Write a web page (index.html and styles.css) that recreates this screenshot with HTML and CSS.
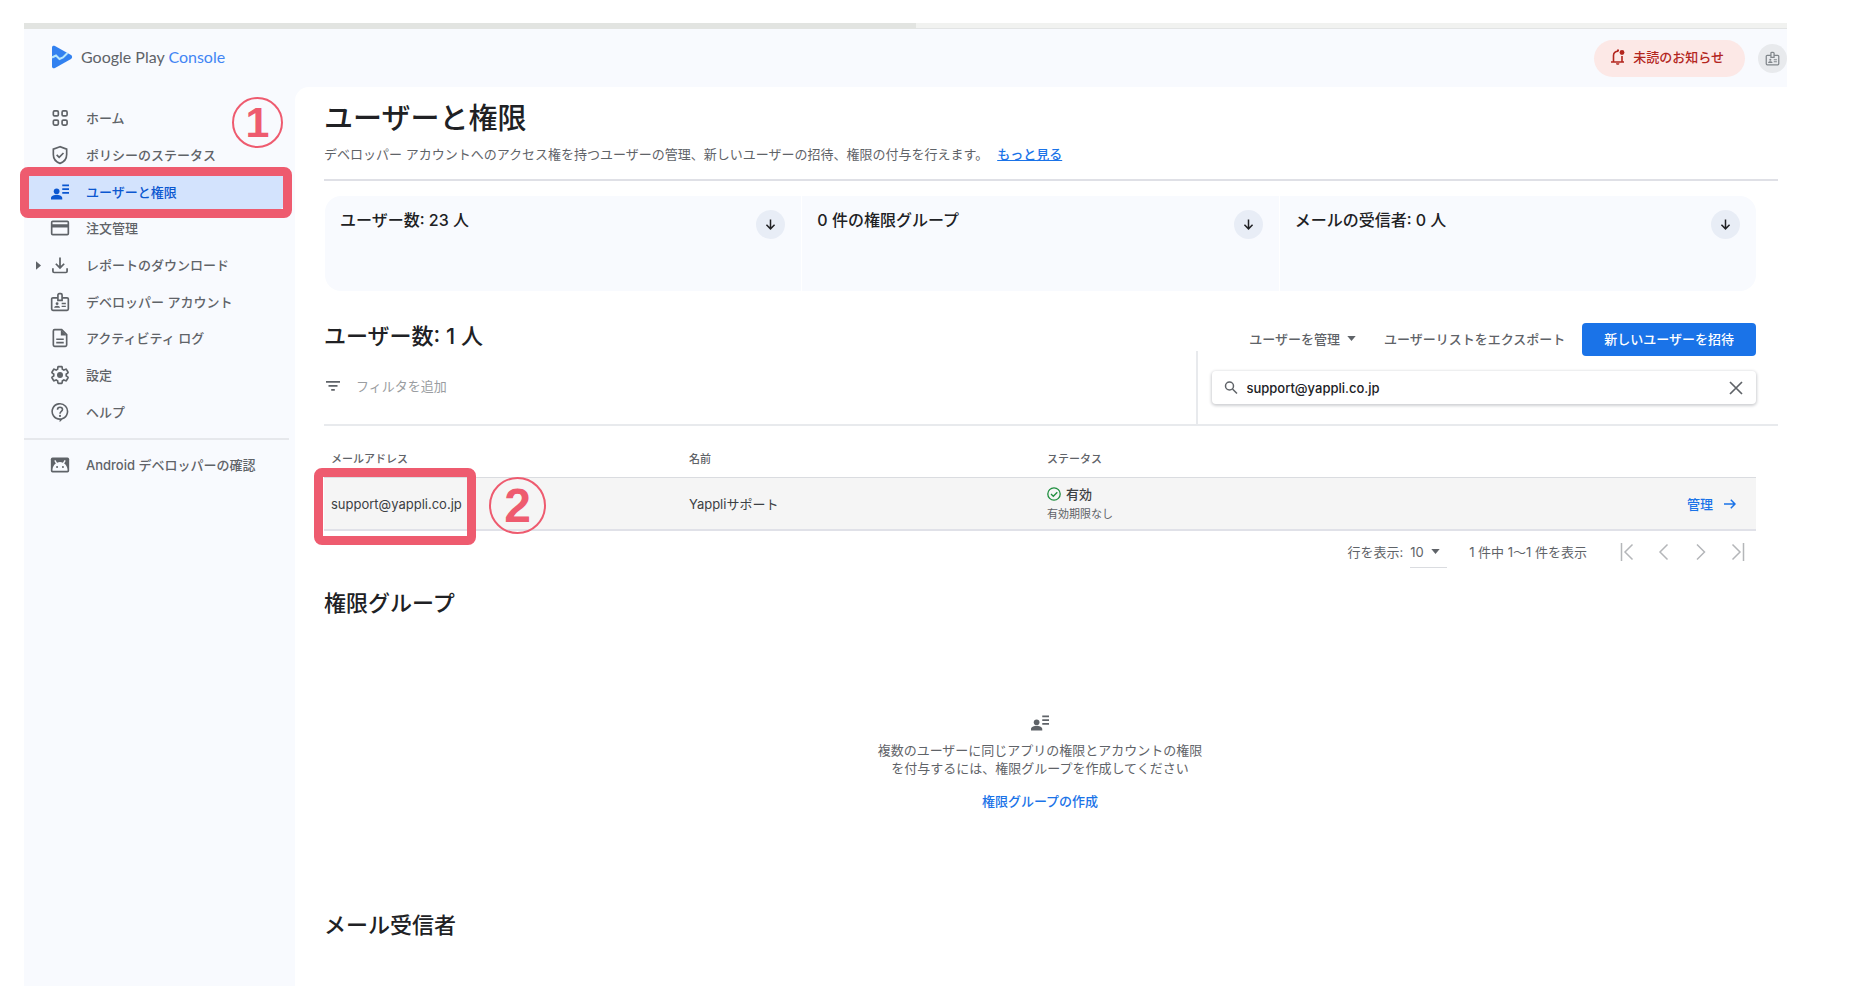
FILE: index.html
```html
<!DOCTYPE html>
<html lang="ja">
<head>
<meta charset="utf-8">
<title>ユーザーと権限 | Google Play Console</title>
<link rel="stylesheet" href="styles.css">
</head>
<body>
<svg class="sprite" aria-hidden="true">
  <symbol id="people" viewBox="0 0 24 24"><circle cx="7.500" cy="11" r="3.800"/><path d="M0 22v-2.200c0-2.800 4.800-4.200 7.500-4.200s7.500 1.400 7.500 4.200V22zM15 2h9v2.200h-9zM15 7h9v2.200h-9zM15 12h9v2.200h-9z"/></symbol>
  <symbol id="badge" viewBox="0 0 24 24"><path d="M9 7H3.500C2.700 7 2 7.700 2 8.500v12c0 .8.700 1.500 1.500 1.500h17c.8 0 1.500-.7 1.500-1.500v-12c0-.8-.7-1.500-1.500-1.500H15M9.500 3.500c0-.8.700-1.500 1.500-1.500h2c.8 0 1.500.7 1.500 1.500V10h-5z" fill="none" stroke="currentColor" stroke-width="2"/><circle cx="8.500" cy="14" r="1.700"/><path d="M5 19c0-1.700 1.500-2.500 3.500-2.500S12 17.300 12 19zM14 13h5v1.600h-5zM14 16.500h5v1.600h-5z"/></symbol>
  <symbol id="down" viewBox="0 0 24 24"><path d="M12 4v15M5.500 12.500 12 19l6.500-6.500" fill="none" stroke="currentColor" stroke-width="2.400"/></symbol>
  <symbol id="caret" viewBox="0 0 10 6"><path d="M0 0h10L5 6z"/></symbol>
</svg>
<div class="app">
  <div class="loading"><span class="loading-bar"></span></div>
  <header class="top">
    <a class="brand" href="#">
      <svg class="logo" viewBox="0 0 22 24"><path fill="#3281f0" d="M1 2.500C1 .8 2.500.3 4 1l16 9c1.500.9 1.500 3 0 4L4 23c-1.500.8-3 .1-3-1.500z"/><path d="m1 12.500 4-2 3.500 3.500 3.500-1.500 4.500-4.500" fill="none" stroke="#b9e8fb" stroke-width="2"/></svg>
      <span class="brand-name">Google Play <span class="brand-product">Console</span></span>
    </a>
    <div class="top-actions">
      <button class="notice" type="button">
        <svg class="bell" viewBox="0 0 14 16"><path d="M2.500 13V6.500C2.500 4 4.500 2.300 7 2.300M11 7v6M0 13h13" fill="none" stroke="currentColor" stroke-width="1.600"/><circle cx="11" cy="3.500" r="2.400"/><path d="M5 14.200h3.400c0 1-.7 1.600-1.700 1.600S5 15.200 5 14.200zM6 .5h2v2H6z"/></svg>
        未読のお知らせ
      </button>
      <button class="account" type="button" aria-label="アカウント"><svg class="icon-s"><use href="#badge"/></svg></button>
    </div>
  </header>
  <div class="body">
    <nav class="side">
      <ul class="menu">
        <li><a class="item" href="#"><svg class="icon" viewBox="0 0 24 24"><g fill="none" stroke="currentColor" stroke-width="2"><rect x="4" y="3.500" width="6" height="6" rx="1.500"/><rect x="14.500" y="3.500" width="6" height="6" rx="1.500"/><rect x="4" y="14.500" width="6" height="6" rx="1.500"/><rect x="14.500" y="14.500" width="6" height="6" rx="1.500"/></g></svg>ホーム</a><span class="step step-1">1</span></li>
        <li><a class="item" href="#"><svg class="icon" viewBox="0 0 24 24"><path d="M12 2 4 5v6.500c0 4.800 3.300 9 8 10.500 4.700-1.500 8-5.700 8-10.500V5zM8 11.800l3 3 5.200-5.200" fill="none" stroke="currentColor" stroke-width="2"/></svg>ポリシーのステータス</a></li>
        <li><a class="item current" href="#" aria-current="page"><svg class="icon"><use href="#people"/></svg>ユーザーと権限</a><span class="frame frame-nav"></span></li>
        <li><a class="item" href="#"><svg class="icon" viewBox="0 0 24 24"><path d="M20.500 3h-17A2.400 2.400 0 0 0 1 5.400v13.200A2.400 2.400 0 0 0 3.500 21h17a2.400 2.400 0 0 0 2.500-2.400V5.400A2.400 2.400 0 0 0 20.500 3zM21 19H3v-7.500h18zM21 7.500H3V5h18z"/></svg>注文管理</a></li>
        <li><svg class="expand" viewBox="0 0 6 10"><path d="M0 0v10l6-5z"/></svg><a class="item" href="#"><svg class="icon" viewBox="0 0 24 24"><path d="M12 3v12M7 10.500l5 5 5-5M3.500 16v3.500c0 .8.600 1.500 1.500 1.500h14c.9 0 1.500-.7 1.500-1.500V16" fill="none" stroke="currentColor" stroke-width="2.100"/></svg>レポートのダウンロード</a></li>
        <li><a class="item" href="#"><svg class="icon"><use href="#badge"/></svg>デベロッパー アカウント</a></li>
        <li><a class="item" href="#"><svg class="icon" viewBox="0 0 24 24"><path d="M14 2H5.500C4.700 2 4 2.700 4 3.500v17c0 .8.700 1.500 1.500 1.500h13c.8 0 1.500-.7 1.500-1.500V8z" fill="none" stroke="currentColor" stroke-width="2"/><path d="M13 2v7h7zM7.500 12.500h9v2h-9zM7.500 16.500h9v2h-9z"/></svg>アクティビティ ログ</a></li>
        <li><a class="item" href="#"><svg class="icon" viewBox="0 0 24 24"><path d="M19.430 12.980c.04-.32.070-.64.070-.98s-.03-.66-.07-.98l2.110-1.650c.19-.15.240-.42.120-.64l-2-3.460c-.12-.22-.39-.3-.61-.22l-2.490 1c-.52-.4-1.080-.73-1.690-.98l-.38-2.650C14.460 2.180 14.250 2 14 2h-4c-.25 0-.46.180-.49.420l-.38 2.650c-.61.250-1.170.590-1.690.980l-2.490-1c-.23-.09-.49 0-.61.220l-2 3.460c-.13.220-.07.490.12.640l2.110 1.650c-.04.320-.07.650-.07.980s.03.660.07.980l-2.110 1.650c-.19.150-.24.420-.12.640l2 3.460c.12.220.39.300.61.220l2.490-1c.52.400 1.080.730 1.690.980l.38 2.650c.03.240.24.420.49.420h4c.25 0 .46-.18.490-.42l.38-2.650c.61-.25 1.170-.59 1.690-.98l2.490 1c.23.090.49 0 .61-.22l2-3.460c.12-.22.070-.49-.12-.64z" fill="none" stroke="currentColor" stroke-width="2"/><circle cx="12" cy="12" r="3.600"/></svg>設定</a></li>
        <li><a class="item" href="#"><svg class="icon" viewBox="0 0 24 24"><path d="M12 20.500a9.200 9.200 0 1 1 2.500-.4L12.500 22v-1.500zM9 9.200c0-1.800 1.300-3 3-3s3 1.200 3 2.900c0 2.200-3 2.300-3 4.900" fill="none" stroke="currentColor" stroke-width="1.900"/><circle cx="12" cy="16.700" r="1.300"/></svg>ヘルプ</a></li>
      </ul>
      <div class="side-foot">
        <a class="item" href="#"><svg class="icon" viewBox="0 0 24 24"><rect x="1" y="3" width="22" height="18" rx="2"/><path class="droid" d="m6.500 6 2 3.200a9 9 0 0 1 7 0l2-3.200 1.400.8-1.900 3.400c2.300 1.600 3.600 4 4 7V19H3v-1.800c.4-3 1.700-5.400 4-7L5.100 6.800z"/><circle cx="8.500" cy="14.500" r="1.200"/><circle cx="15.500" cy="14.500" r="1.200"/></svg>Android デベロッパーの確認</a>
      </div>
    </nav>
    <main class="main">
      <h1 class="title">ユーザーと権限</h1>
      <p class="lead">デベロッパー アカウントへのアクセス権を持つユーザーの管理、新しいユーザーの招待、権限の付与を行えます。<a class="more" href="#">もっと見る</a></p>
      <section class="cards">
        <div class="card"><h3 class="card-title">ユーザー数: 23 人</h3><button class="round" type="button" aria-label="ユーザーへ移動"><svg class="icon-s"><use href="#down"/></svg></button></div>
        <div class="card"><h3 class="card-title">0 件の権限グループ</h3><button class="round" type="button" aria-label="権限グループへ移動"><svg class="icon-s"><use href="#down"/></svg></button></div>
        <div class="card"><h3 class="card-title">メールの受信者: 0 人</h3><button class="round" type="button" aria-label="メール受信者へ移動"><svg class="icon-s"><use href="#down"/></svg></button></div>
      </section>
      <section>
        <div class="list-head">
          <h2 class="heading">ユーザー数: 1 人</h2>
          <div class="actions">
            <button class="plain" type="button">ユーザーを管理<svg class="caret"><use href="#caret"/></svg></button>
            <button class="plain" type="button">ユーザーリストをエクスポート</button>
            <button class="primary" type="button">新しいユーザーを招待</button>
          </div>
        </div>
        <div class="filters">
          <label class="filter"><svg class="filter-icon" viewBox="0 0 14 10"><path d="M0 0h14v1.700H0zM2.500 4h9v1.700h-9zM5.200 8h3.600v1.700H5.200z"/></svg><input class="filter-input" type="text" placeholder="フィルタを追加" aria-label="フィルタを追加"></label>
          <div class="search-cell">
            <label class="search">
              <svg class="search-icon" viewBox="0 0 14 14"><g fill="none" stroke="currentColor" stroke-width="1.500"><circle cx="5.500" cy="5" r="4"/><path d="m8.500 8 4.500 4.500"/></g></svg>
              <input class="search-input" type="text" value="support@yappli.co.jp" aria-label="ユーザーを検索">
              <button class="clear" type="button" aria-label="クリア"><svg class="clear-icon" viewBox="0 0 14 14"><path d="m1 1 12 12M13 1 1 13" fill="none" stroke="currentColor" stroke-width="1.700"/></svg></button>
            </label>
          </div>
        </div>
        <table class="users">
          <thead><tr><th>メールアドレス</th><th>名前</th><th>ステータス</th><th class="manage-col"></th></tr></thead>
          <tbody><tr>
            <td class="mail">support@yappli.co.jp<span class="frame frame-mail"></span><span class="step step-2">2</span></td>
            <td>Yappliサポート</td>
            <td><span class="status"><svg class="ok" viewBox="0 0 14 14"><g fill="none" stroke="currentColor" stroke-width="1.300"><circle cx="7" cy="7" r="6.200"/><path d="m4 7 2.300 2.300 4-4"/></g></svg>有効</span><span class="expiry">有効期限なし</span></td>
            <td class="manage-col"><a class="link" href="#">管理<svg class="arrow" viewBox="0 0 12 10"><path d="M0 5h11M6.800.8 11 5 6.800 9.200" fill="none" stroke="currentColor" stroke-width="1.500"/></svg></a></td>
          </tr></tbody>
        </table>
        <div class="pager">
          <label class="rows-label" for="rows">行を表示:</label>
          <span class="rows"><select id="rows" class="rows-select"><option>10</option></select><svg class="caret rows-caret"><use href="#caret"/></svg></span>
          <span class="range">1 件中 1〜1 件を表示</span>
          <div class="pages">
            <button class="page" type="button" aria-label="最初のページ"><svg viewBox="0 0 24 24"><path d="M6.500 3v18M17.500 4.500 10 12l7.500 7.500"/></svg></button>
            <button class="page" type="button" aria-label="前のページ"><svg viewBox="0 0 24 24"><path d="M15.500 4.500 8 12l7.500 7.500"/></svg></button>
            <button class="page" type="button" aria-label="次のページ"><svg viewBox="0 0 24 24"><path d="M8 4.500l7.500 7.500L8 19.500"/></svg></button>
            <button class="page" type="button" aria-label="最後のページ"><svg viewBox="0 0 24 24"><path d="M6.500 4.500 14 12l-7.500 7.500M17.500 3v18"/></svg></button>
          </div>
        </div>
      </section>
      <section class="groups">
        <h2 class="heading">権限グループ</h2>
        <div class="empty">
          <svg class="icon"><use href="#people"/></svg>
          <p class="empty-text">複数のユーザーに同じアプリの権限とアカウントの権限<br>を付与するには、権限グループを作成してください</p>
          <a class="link" href="#">権限グループの作成</a>
        </div>
      </section>
      <section>
        <h2 class="heading">メール受信者</h2>
      </section>
    </main>
  </div>
</div>
</body>
</html>
```
FILE: styles.css
```css
* { box-sizing: border-box; }
body {
  margin: 0;
  background: #fff;
  color: #5f6368;
  font: 500 13px/20px Inter, "Noto Sans CJK JP", sans-serif;
}
h1, h2, h3, p, ul { margin: 0; padding: 0; font-weight: 500; }
button, input, select { font: inherit; color: inherit; border: 0; background: none; padding: 0; margin: 0; }
svg { fill: currentColor; flex: none; display: block; }
.sprite { position: absolute; width: 0; height: 0; }

.app {
  display: flex;
  flex-direction: column;
  min-height: 100vh;
  padding: 23px 67px 0 24px;
}
.loading { height: 6px; background: #f1f2f0; border-bottom: 1px solid #e2e4e4; }
.loading-bar { display: block; width: 892px; max-width: 51%; height: 6px; background: #e2e4e1; }

.top {
  display: flex;
  justify-content: space-between;
  align-items: center;
  height: 58px;
  padding-left: 27px;
  background: #f8fafe;
}
.brand { display: flex; align-items: center; gap: 8px; padding-bottom: 2px; text-decoration: none; }
.logo { width: 22px; height: 24px; }
.brand-name { font: 400 16px/24px Lato, sans-serif; color: #5f6368; }
.brand-product { color: #4285f4; }
.top-actions { display: flex; align-items: center; gap: 13px; }
.notice {
  display: flex;
  align-items: center;
  gap: 8px;
  height: 37px;
  padding: 0 21px 2px 17px;
  border-radius: 19px;
  background: #fce8e6;
  color: #b3261e;
}
.bell { width: 14px; height: 16px; }
.account, .round { display: grid; place-items: center; width: 29px; height: 29px; border-radius: 50%; }
.account { background: #e8eaed; color: #80868b; }
.icon { width: 20px; height: 20px; }
.icon-s { width: 15px; height: 15px; }

.body { display: flex; flex: 1; background: #f8fafe; }
.side { flex: none; width: 271px; padding-top: 13px; }
.menu { display: grid; grid-auto-rows: 1fr; height: 330px; list-style: none; }
.menu li { position: relative; display: grid; }
.item {
  display: flex;
  align-items: center;
  gap: 16px;
  margin-right: 10px;
  padding-left: 26px;
  color: #5f6368;
  text-decoration: none;
}
.item.current { border-radius: 0 8px 8px 0; background: #d3e3fd; color: #0b57d0; }
.item.current .icon { padding: 1px; }
.droid { fill: #f8fafe; }
.expand { position: absolute; left: 12px; top: 14px; width: 5px; height: 9px; }
.side-foot { margin: 8px 6px 0 0; padding-top: 15px; border-top: 2px solid #e6e8ec; }

.frame { position: absolute; border: 9px solid #ee5b6f; border-radius: 8px; pointer-events: none; }
.frame-nav { inset: -6px 3px -8px -4px; }
.frame-mail { left: -10px; top: -10px; width: 162px; height: 77px; }
.step {
  position: absolute;
  display: grid;
  place-items: center;
  border: 2px solid #ee5b6f;
  border-radius: 50%;
  color: #ee5b6f;
  font: 700 43px/1 "Liberation Sans", Arial, sans-serif;
}
.step-1 { left: 208px; top: -3px; width: 51px; height: 51px; }
.step-2 { left: 165px; top: -1px; width: 57px; height: 57px; font-size: 48px; }

.main { flex: 1; min-width: 0; padding: 12px 9px 0 29px; border-radius: 14px 0 0 0; background: #fff; }
.title { color: #202124; font-size: 29px; line-height: 40px; }
.lead { padding: 5px 0 15px; border-bottom: 2px solid #dfe0e6; font-weight: 400; }
.more { margin-left: 9px; color: #1a73e8; font-weight: 500; }
.cards { display: grid; grid-template-columns: repeat(3, 1fr); gap: 1px; margin: 15px 22px 32px 1px; border-radius: 16px; overflow: hidden; }
.card { display: flex; justify-content: space-between; align-items: flex-start; height: 95px; padding: 14px 16px 0 15px; background: #f8fafe; }
.card-title { color: #202124; font-size: 16px; line-height: 20px; }
.round { background: #e8edf6; color: #202124; }

.list-head { display: flex; justify-content: space-between; align-items: flex-start; margin-right: 22px; }
.heading { color: #202124; font-size: 22px; line-height: 26px; }
.actions { display: flex; gap: 17px; height: 33px; }
.plain { display: flex; align-items: center; gap: 7px; padding-bottom: 2px; }
.plain:first-child { margin-right: 11px; }
.caret { width: 9px; height: 5px; }
.primary { padding: 0 22px 2px; border-radius: 4px; background: #1a73e8; color: #fff; }
.filters { display: flex; align-items: stretch; height: 75px; margin-top: -5px; border-bottom: 2px solid #e8eaed; }
.filter { display: flex; align-items: center; flex: 1; gap: 16px; padding: 0 0 3px 2px; }
.filter-icon { width: 14px; height: 10px; }
.filter-input { flex: 1; font-weight: 400; outline: 0; }
.filter-input::placeholder { color: #9a9da1; opacity: 1; }
.search-cell { display: flex; align-items: center; width: 40%; padding: 0 22px 0 14px; border-left: 2px solid #e8eaed; }
.search { display: flex; align-items: center; flex: 1; gap: 8px; height: 33px; padding: 0 13px 0 12px; border-radius: 4px; box-shadow: 0 1px 3px 1px #d0d1d4; }
.search-icon { width: 14px; height: 14px; }
.search-input { flex: 1; color: #202124; outline: 0; }
.clear-icon { width: 14px; height: 14px; }

.users { width: calc(100% - 22px); border-collapse: separate; border-spacing: 0; table-layout: fixed; }
.users th { height: 51px; padding: 15px 0 0 7px; font-size: 11px; font-weight: 500; text-align: left; }
.users td { position: relative; height: 54px; padding: 0 0 0 7px; border-top: 1px solid #dadce0; border-bottom: 2px solid #e0e1e8; background: #f5f5f5; color: #3c4043; font-weight: 400; }
.users .manage-col { padding-right: 20px; text-align: right; }
.status { display: flex; align-items: center; gap: 5px; font-weight: 500; }
.ok { width: 14px; height: 14px; color: #1e8e3e; }
.expiry { display: block; color: #5f6368; font-size: 11px; }
.link { display: inline-flex; align-items: center; gap: 11px; color: #1a73e8; font-weight: 500; text-decoration: none; }
.arrow { width: 12px; height: 10px; }

.pager { display: flex; align-items: center; justify-content: flex-end; height: 42px; margin-right: 22px; padding-right: 6px; font-weight: 400; }
.rows { position: relative; display: flex; align-items: center; width: 37px; height: 31px; margin: 0 22px 0 7px; border-bottom: 1px solid #dadce0; }
.rows-select { width: 100%; appearance: none; outline: 0; }
.rows-caret { position: absolute; right: 7px; pointer-events: none; }
.pages { display: flex; gap: 13px; margin-left: 28px; }
.page { width: 24px; height: 24px; color: #b4b6b9; }
.page path { fill: none; stroke: currentColor; stroke-width: 1.500; }

.groups { margin: 17px 22px 101px 0; }
.empty { display: flex; flex-direction: column; align-items: center; padding-top: 97px; }
.empty .icon { padding: 1px; }
.empty-text { margin: 8px 0 14px; line-height: 18px; font-weight: 400; text-align: center; }
```
